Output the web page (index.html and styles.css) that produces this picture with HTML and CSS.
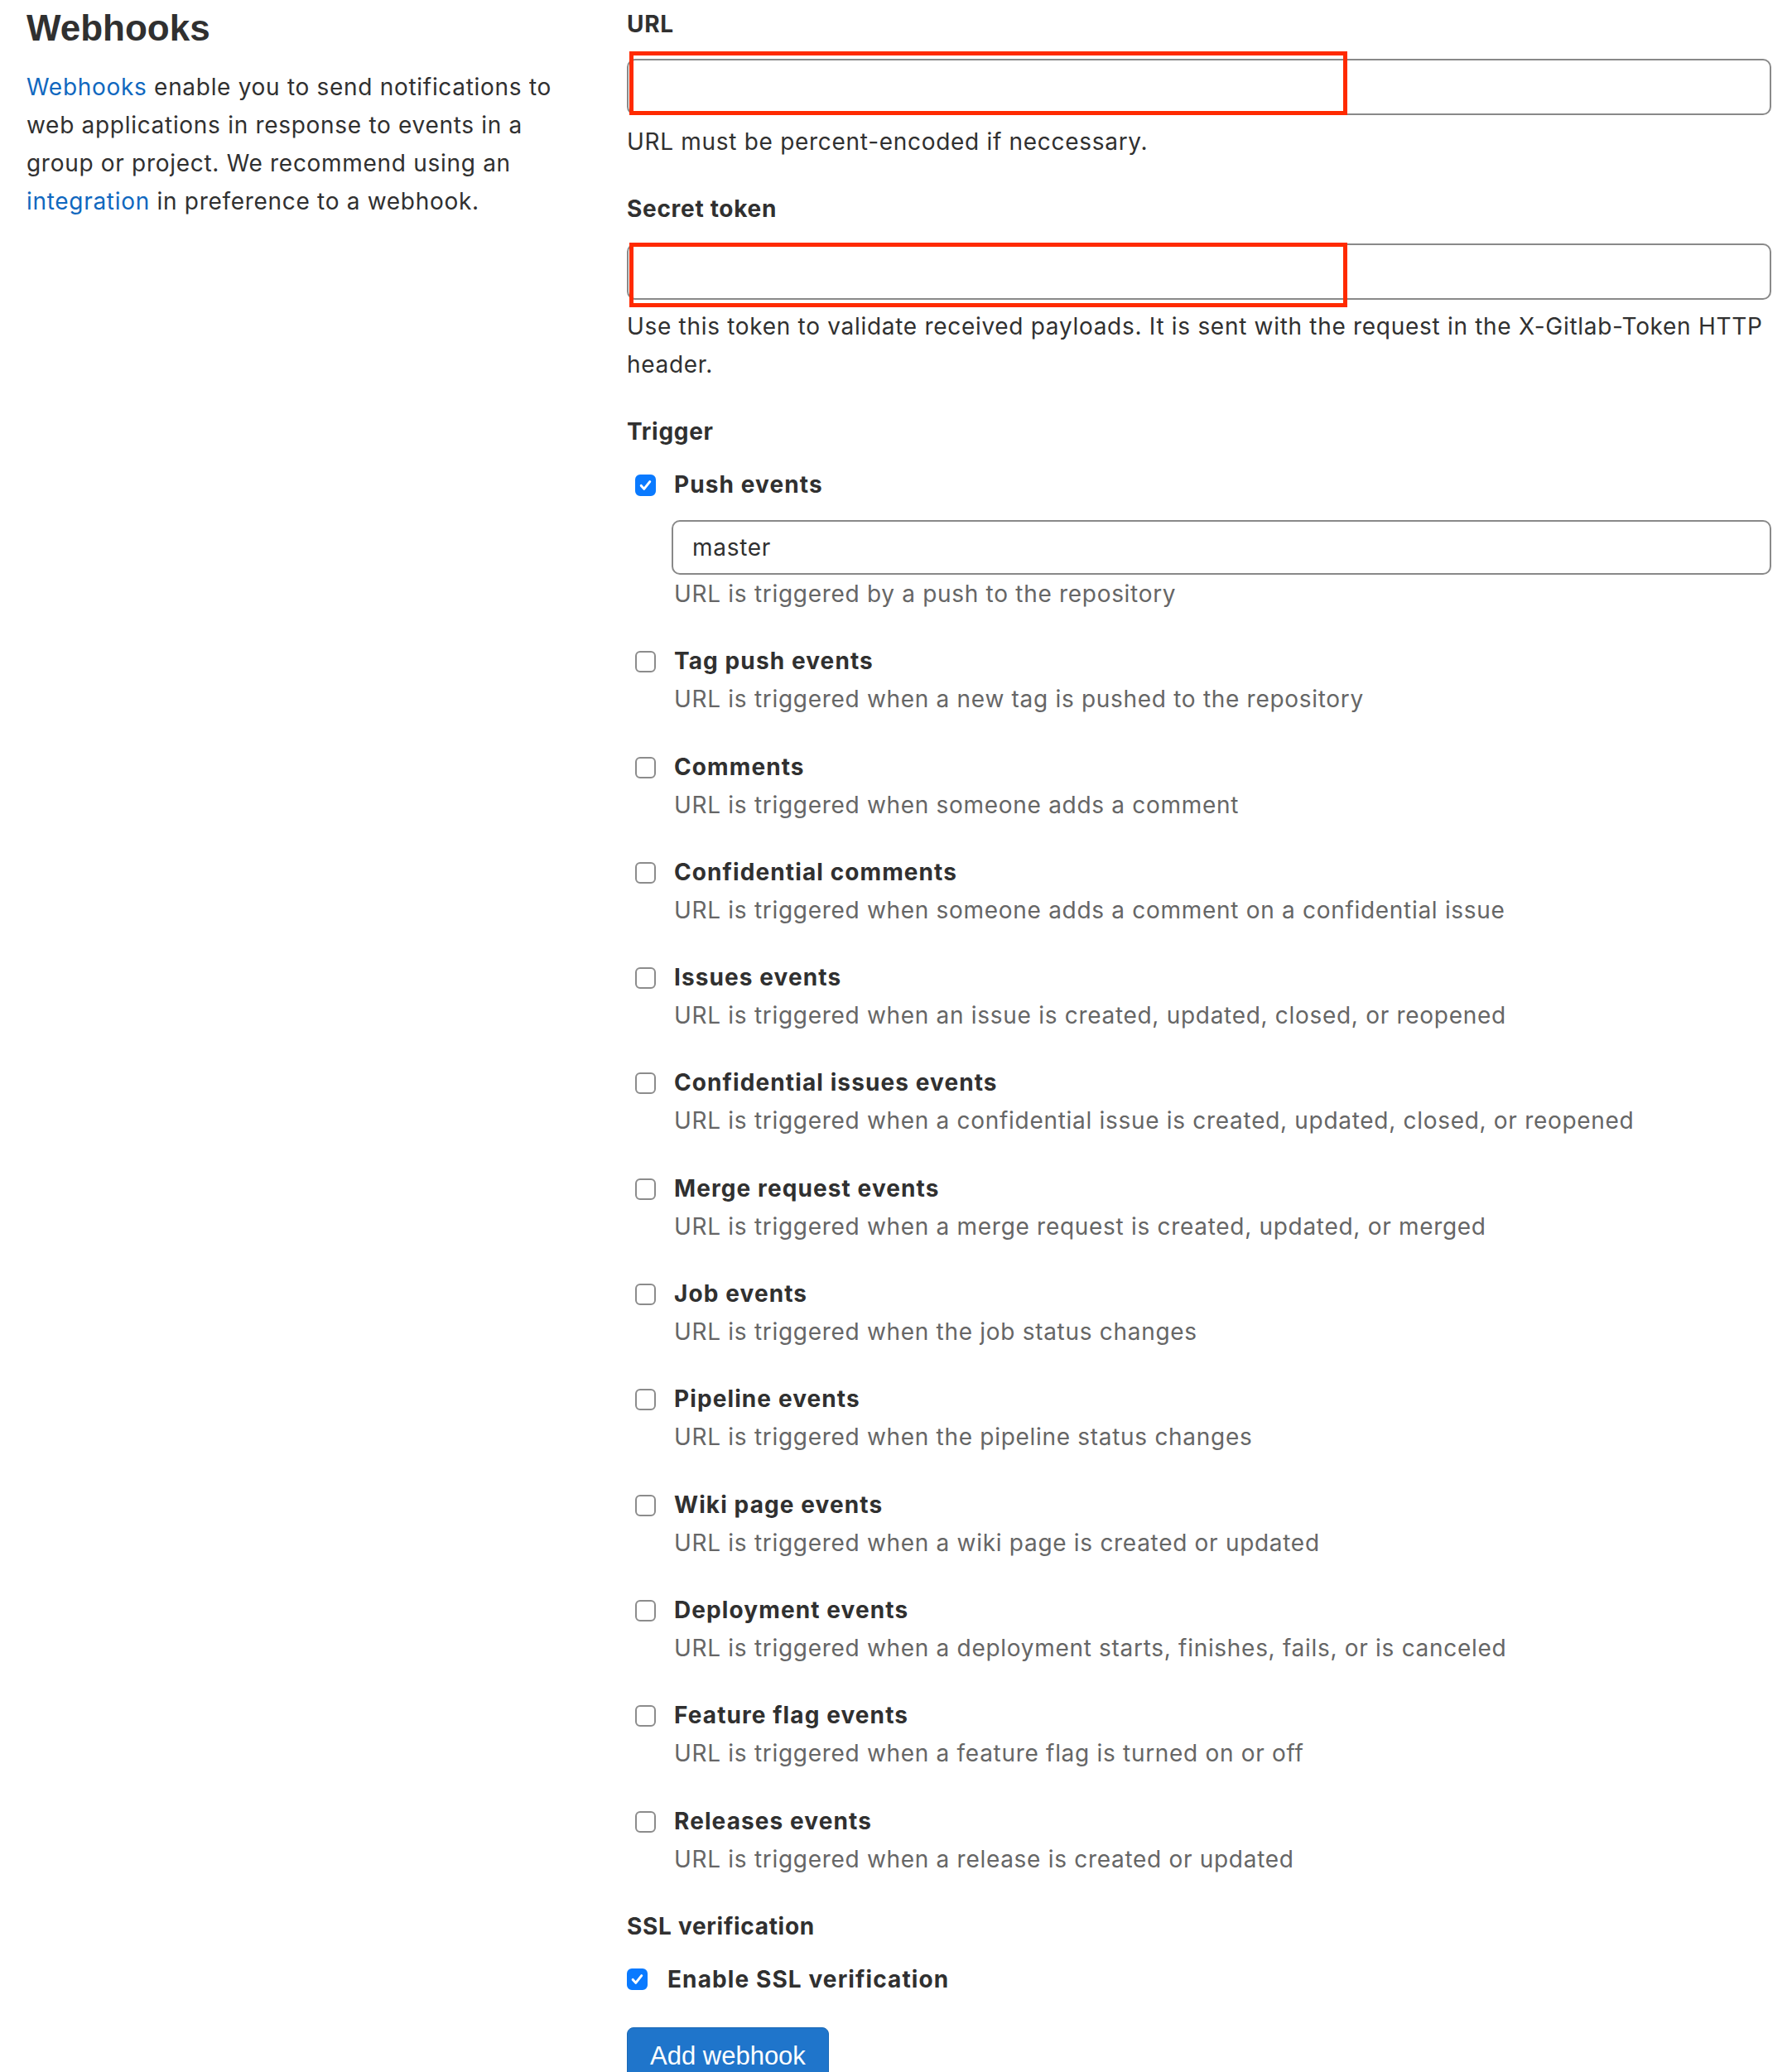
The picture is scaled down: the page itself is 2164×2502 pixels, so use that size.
FILE: index.html
```html
<!DOCTYPE html>
<html>
<head>
    <title>Webhooks</title>
    <link rel="stylesheet" href="styles.css">
</head>
<body>
    <div class="settings">
        <div class="settings-side">
            <h4>Webhooks</h4>
            <p><a href="#">Webhooks</a> enable you to send notifications to web applications in response to events in a group or project. We recommend using an <a href="#">integration</a> in preference to a webhook.</p>
        </div>

        <form class="settings-main">
            <div class="form-group">
                <label class="label-bold">URL</label>
                <div class="field">
                    <input type="text" class="form-control">
                    <span class="redact redact-url"></span>
                </div>
                <p class="form-text">URL must be percent-encoded if neccessary.</p>
            </div>

            <div class="form-group">
                <label class="label-bold">Secret token</label>
                <div class="field">
                    <input type="text" class="form-control">
                    <span class="redact redact-token"></span>
                </div>
                <p class="form-text">Use this token to validate received payloads. It is sent with the request in the X-Gitlab-Token HTTP header.</p>
            </div>

            <div class="form-group">
                <label class="label-bold">Trigger</label>
                <ul class="triggers">
                    <li class="trigger">
                        <div class="trigger-head">
                            <span class="check checked"><svg viewBox="0 0 24 24"><path d="M6 12.5l4 4.5 8-10"/></svg></span>
                            <strong>Push events</strong>
                        </div>
                        <input type="text" class="form-control branch" value="master">
                        <p class="help">URL is triggered by a push to the repository</p>
                    </li>
                    <li class="trigger">
                        <div class="trigger-head"><span class="check"></span><strong>Tag push events</strong></div>
                        <p class="help">URL is triggered when a new tag is pushed to the repository</p>
                    </li>
                    <li class="trigger">
                        <div class="trigger-head"><span class="check"></span><strong>Comments</strong></div>
                        <p class="help">URL is triggered when someone adds a comment</p>
                    </li>
                    <li class="trigger">
                        <div class="trigger-head"><span class="check"></span><strong>Confidential comments</strong></div>
                        <p class="help">URL is triggered when someone adds a comment on a confidential issue</p>
                    </li>
                    <li class="trigger">
                        <div class="trigger-head"><span class="check"></span><strong>Issues events</strong></div>
                        <p class="help">URL is triggered when an issue is created, updated, closed, or reopened</p>
                    </li>
                    <li class="trigger">
                        <div class="trigger-head"><span class="check"></span><strong>Confidential issues events</strong></div>
                        <p class="help">URL is triggered when a confidential issue is created, updated, closed, or reopened</p>
                    </li>
                    <li class="trigger">
                        <div class="trigger-head"><span class="check"></span><strong>Merge request events</strong></div>
                        <p class="help">URL is triggered when a merge request is created, updated, or merged</p>
                    </li>
                    <li class="trigger">
                        <div class="trigger-head"><span class="check"></span><strong>Job events</strong></div>
                        <p class="help">URL is triggered when the job status changes</p>
                    </li>
                    <li class="trigger">
                        <div class="trigger-head"><span class="check"></span><strong>Pipeline events</strong></div>
                        <p class="help">URL is triggered when the pipeline status changes</p>
                    </li>
                    <li class="trigger">
                        <div class="trigger-head"><span class="check"></span><strong>Wiki page events</strong></div>
                        <p class="help">URL is triggered when a wiki page is created or updated</p>
                    </li>
                    <li class="trigger">
                        <div class="trigger-head"><span class="check"></span><strong>Deployment events</strong></div>
                        <p class="help">URL is triggered when a deployment starts, finishes, fails, or is canceled</p>
                    </li>
                    <li class="trigger">
                        <div class="trigger-head"><span class="check"></span><strong>Feature flag events</strong></div>
                        <p class="help">URL is triggered when a feature flag is turned on or off</p>
                    </li>
                    <li class="trigger">
                        <div class="trigger-head"><span class="check"></span><strong>Releases events</strong></div>
                        <p class="help">URL is triggered when a release is created or updated</p>
                    </li>
                </ul>
            </div>

            <div class="form-group">
                <label class="label-bold">SSL verification</label>
                <div class="ssl-row">
                    <span class="check checked"><svg viewBox="0 0 24 24"><path d="M6 12.5l4 4.5 8-10"/></svg></span>
                    <strong>Enable SSL verification</strong>
                </div>
            </div>

            <button type="button" class="btn-confirm">Add webhook</button>
        </form>
    </div>
</body>
</html>
```

FILE: styles.css
```css
body {
    margin: 0;
    background-color: #fff;
    color: #303030;
    font-family: Inter, "Noto Sans", sans-serif;
    font-size: 28px;
    line-height: 46px;
    letter-spacing: 0.7px;
    overflow: hidden;
}

.settings {
    display: grid;
    grid-template-columns: 725px 1fr;
    padding: 0 25px 0 32px;
}

.settings-side h4 {
    font-family: "Liberation Sans", Arial, sans-serif;
    font-size: 44px;
    font-weight: bold;
    line-height: 52px;
    letter-spacing: 0;
    margin: 8px 0 22px 0;
}

.settings-side p {
    margin: 0;
    width: 660px;
}

.settings-side a {
    color: #1068bf;
    text-decoration: none;
}

.settings-main {
    padding-top: 6px;
}

.form-group {
    margin-bottom: 35px;
}

.label-bold {
    display: block;
    font-weight: 700;
    letter-spacing: 0.7px;
}

.field {
    position: relative;
    margin-top: 19px;
}

.form-control {
    display: block;
    box-sizing: border-box;
    width: 100%;
    height: 68px;
    border: 2px solid #898989;
    border-radius: 10px;
    background: #fff;
    font-family: inherit;
    font-size: 28px;
    letter-spacing: 0.7px;
    color: #303030;
    padding: 0 23px;
    outline: none;
}

/* rote Markierung über den Feldern */
.redact {
    position: absolute;
    left: 3px;
    width: 867px;
    box-sizing: border-box;
    border: 5px solid #ff2a00;
}

.redact-url {
    top: -9px;
    height: 77px;
}

.redact-token {
    top: -1px;
    height: 78px;
}

.form-text {
    margin: 9px -20px 0 0;
}

.triggers {
    list-style: none;
    margin: 18px 0 0 0;
    padding: 0;
}

.trigger {
    margin-bottom: 35.3px;
    padding-left: 57px;
}

.trigger:last-child {
    margin-bottom: 0;
}

.trigger-head {
    position: relative;
}

.trigger-head strong,
.ssl-row strong {
    font-weight: 700;
    letter-spacing: 1.1px;
}

.trigger-head .check {
    position: absolute;
    left: -47px;
    top: 11px;
}

.check {
    display: inline-block;
    box-sizing: border-box;
    width: 25px;
    height: 26px;
    border: 2px solid #8c8c8c;
    border-radius: 6px;
    background: #fff;
    vertical-align: middle;
}

.check.checked {
    background: #0a7aff;
    border-color: #0a7aff;
}

.check svg {
    display: block;
    width: 21px;
    height: 22px;
    fill: none;
    stroke: #fff;
    stroke-width: 3.4;
    stroke-linecap: round;
    stroke-linejoin: round;
}

.branch {
    margin: 20px 0 0 -3px;
    width: calc(100% + 3px);
    height: 66px;
}

.help {
    margin: 0;
    color: #666;
}

.ssl-row {
    display: flex;
    align-items: center;
    gap: 24px;
    margin-top: 18px;
}

.btn-confirm {
    display: block;
    height: 70px;
    padding: 0 27px;
    border: 1px solid #1b69b6;
    border-radius: 8px;
    background-color: #1f75cb;
    color: #fff;
    font-family: "Liberation Sans", Arial, sans-serif;
    font-size: 31px;
    letter-spacing: 0;
}
```
